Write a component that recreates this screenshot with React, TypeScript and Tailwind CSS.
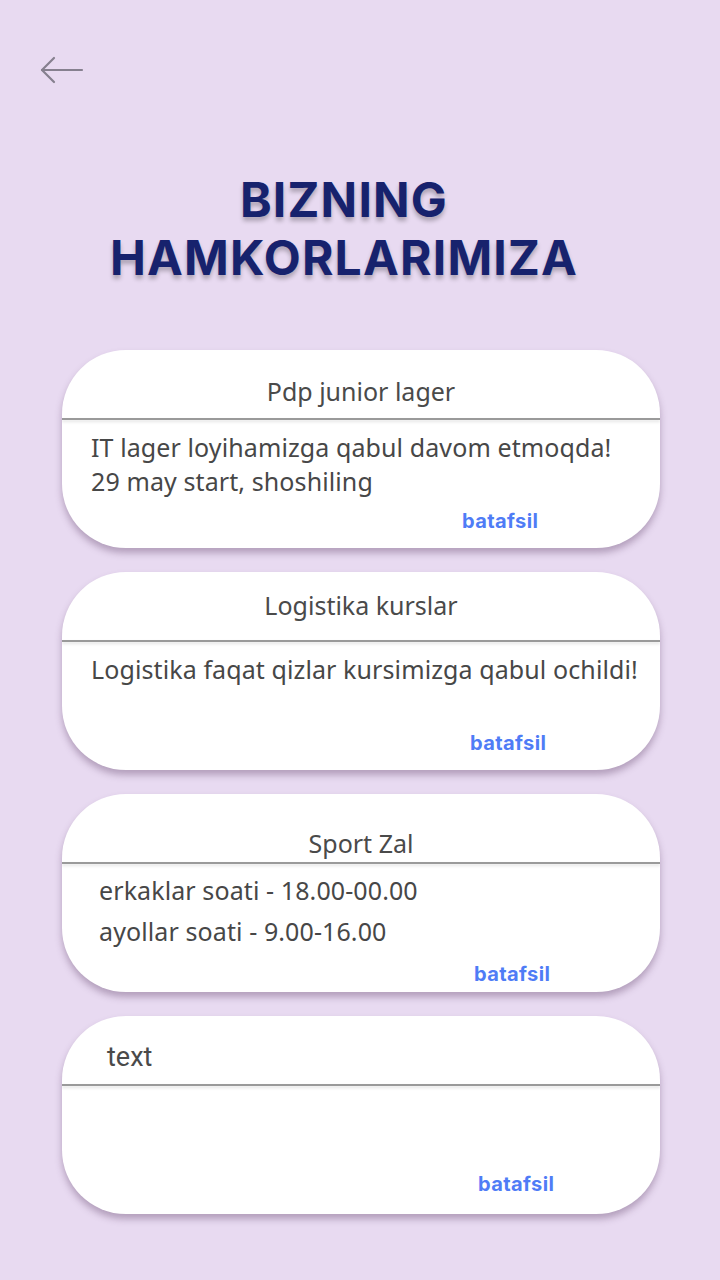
import React from 'react';

type Card = {
  title: string;
  lines: string[];
  headerClass: string;
  bodyClass: string;
  linkClass: string;
};

const cards: Card[] = [
  {
    title: 'Pdp junior lager',
    lines: ['IT lager loyihamizga qabul davom etmoqda!', '29 may start, shoshiling'],
    headerClass: 'justify-center pt-[25px] text-[25px]',
    bodyClass: 'pl-[29px] pt-[10px] leading-[34px]',
    linkClass: 'ml-[400px] mb-[15px]',
  },
  {
    title: 'Logistika kurslar',
    lines: ['Logistika faqat qizlar kursimizga qabul ochildi!'],
    headerClass: 'justify-center pt-[17px] text-[25px]',
    bodyClass: 'pl-[29px] pt-[10px] leading-[34px]',
    linkClass: 'ml-[408px] mb-[15px]',
  },
  {
    title: 'Sport Zal',
    lines: ['erkaklar soati - 18.00-00.00', 'ayollar soati - 9.00-16.00'],
    headerClass: 'justify-center pt-[33px] text-[25px]',
    bodyClass: 'pl-[37px] pt-[6px] leading-[41px]',
    linkClass: 'ml-[412px] mb-[6px]',
  },
  {
    title: 'text',
    lines: [],
    headerClass: 'justify-start pl-[45px] pt-[25px] text-[27px] font-["Roboto",sans-serif]',
    bodyClass: 'pl-[29px] pt-[10px] leading-[34px]',
    linkClass: 'ml-[416px] mb-[18px]',
  },
];

function BackArrow() {
  return (
    <svg width="44" height="28" viewBox="0 0 44 28" fill="none">
      <path d="M2 14 H42" stroke="#86808f" strokeWidth="2.2" strokeLinecap="round" />
      <path d="M14 2 L2 14 L14 26" stroke="#86808f" strokeWidth="2.2" strokeLinecap="round" strokeLinejoin="round" />
    </svg>
  );
}

function PartnerCard({ card }: { card: Card }) {
  return (
    <div className="w-[598px] h-[198px] ml-[62px] bg-white rounded-[64px] flex flex-col overflow-hidden shadow-[0_5px_7px_rgba(80,50,90,0.35)]">
      <div className={`h-[68px] flex items-start leading-[32px] text-[#4a4a4a] ${card.headerClass}`}>
        {card.title}
      </div>
      <div className="h-[2px] bg-[#9a9a9a] shadow-[0_2px_3px_rgba(0,0,0,0.12)]" />
      <div className={`text-[25px] tracking-[0.1px] text-[#474747] ${card.bodyClass}`}>
        {card.lines.map((l) => (
          <div key={l}>{l}</div>
        ))}
      </div>
      <div
        className={`mt-auto self-start text-[20px] leading-[24px] font-bold tracking-[0.4px] text-[#4f7cf6] font-['Inter',sans-serif] ${card.linkClass}`}
      >
        batafsil
      </div>
    </div>
  );
}

export default function App() {
  return (
    <div className="w-[720px] h-[1280px] bg-[#e8daf1] font-['Noto_Sans',sans-serif] overflow-hidden">
      <div className="pt-[56px] pl-[40px]">
        <BackArrow />
      </div>

      <h1 className="mt-[87px] pr-[32px] text-center font-['Inter',sans-serif] font-bold text-[48px] leading-[58px] tracking-[1.2px] text-[#17226d] [text-shadow:0_4px_4px_rgba(0,0,0,0.25)]">
        BIZNING
        <br />
        HAMKORLARIMIZA
      </h1>

      <div className="mt-[63px] flex flex-col gap-[24px]">
        {cards.map((c) => (
          <PartnerCard key={c.title} card={c} />
        ))}
      </div>
    </div>
  );
}
